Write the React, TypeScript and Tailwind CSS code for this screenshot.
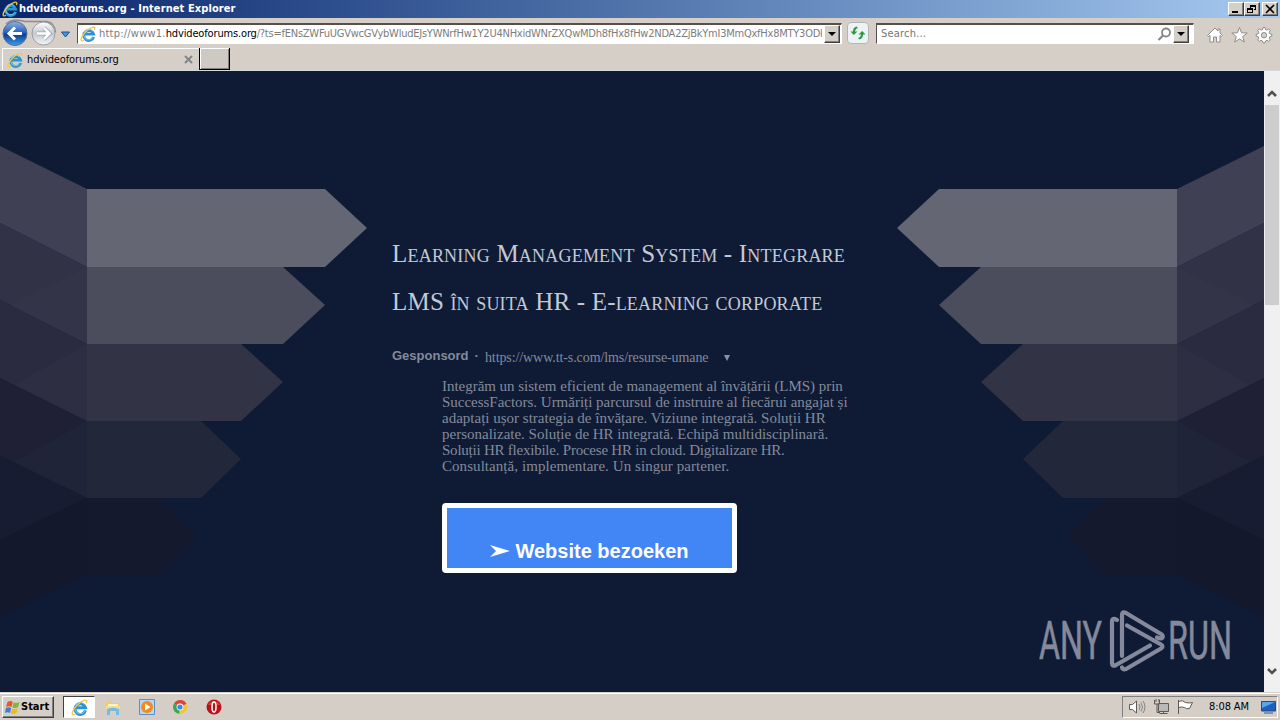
import type { ReactNode } from 'react'

const tahoma = "font-['DejaVu_Sans_Condensed','DejaVu_Sans',sans-serif]"
const raised = 'border border-t-white border-l-white border-r-[#404040] border-b-[#404040] bg-[#d4d0c8] shadow-[inset_-1px_-1px_0_#808080]'

function IeLogo({ size }: { size: number }) {
  return (
    <svg width={size} height={size} viewBox="0 0 16 16" fill="none" className="shrink-0">
      <path d="M13.6 10.800A5 5 0 1 1 13.600 8.200H4.600" stroke="#2a93d3" strokeWidth="2.800" />
      <path d="M13 11.300A4.900 4.900 0 0 1 3.800 9.500M4.500 5.500A5 5 0 0 1 12.500 5" stroke="#7ccdf2" strokeWidth="0.900" />
      <path d="M4 14.200c-2.200 1.400-3.400.5-2.600-1.900C2.700 8.300 8 2.700 12.300 1.300c2.400-.7 3 .7 2.100 2.700" stroke="#efc94a" strokeWidth="1.300" />
    </svg>
  )
}

function WindowButton({ children }: { children: ReactNode }) {
  return (
    <div className={`flex h-[14px] w-4 items-center justify-center ${raised}`}>
      <svg width="12" height="10" viewBox="0 0 12 10" fill="none" stroke="#000" shapeRendering="crispEdges">
        {children}
      </svg>
    </div>
  )
}

function DropButton() {
  return (
    <div className={`flex h-[18px] w-4 items-center justify-center ${raised}`}>
      <svg width="8" height="4" viewBox="0 0 8 4">
        <path d="M0 0h8L4 4z" fill="#000" />
      </svg>
    </div>
  )
}

function TitleBar() {
  return (
    <div className="flex h-[18px] items-center justify-between bg-linear-to-r from-[#0a246a] to-[#a6caf0] pr-[2px] pl-[2px]">
      <div className="flex items-center">
        <IeLogo size={16} />
        <span className={`ml-px pt-px whitespace-nowrap text-[11px] font-bold tracking-[0.09px] text-white ${tahoma}`}>
          hdvideoforums.org - Internet Explorer
        </span>
      </div>
      <div className="flex">
        <WindowButton>
          <path d="M2 8h6" strokeWidth="2" />
        </WindowButton>
        <WindowButton>
          <path d="M4 1h6M4 2h6M4.500 1v3M9.500 1v5M8 5.500h2M1 4h6M1 5h6M1.500 4v5M6.500 4v5M1 8.500h6" />
        </WindowButton>
        <div className="ml-[2px]">
          <WindowButton>
            <path d="M2 1l8 8M10 1l-8 8" strokeWidth="1.600" shapeRendering="auto" />
          </WindowButton>
        </div>
      </div>
    </div>
  )
}

function NavButtons() {
  return (
    <svg width="75" height="28" viewBox="0 0 75 28" fill="none" className="shrink-0">
      <defs>
        <linearGradient id="back" x1="0" y1="0" x2="0" y2="1">
          <stop offset="0" stopColor="#8fb4e6" />
          <stop offset="0.450" stopColor="#2a62bb" />
          <stop offset="0.550" stopColor="#0d3e95" />
          <stop offset="1" stopColor="#3aa0ee" />
        </linearGradient>
        <linearGradient id="forward" x1="0" y1="0" x2="0" y2="1">
          <stop offset="0" stopColor="#ffffff" />
          <stop offset="0.500" stopColor="#c3c8cf" />
          <stop offset="1" stopColor="#f4f6f8" />
        </linearGradient>
      </defs>
      <path d="M6 5C11 0 19 .5 25 2.500h22c5 1 8 5 8.500 11" stroke="#8b8d94" strokeWidth="1.500" />
      <circle cx="43.500" cy="14.500" r="11.500" fill="url(#forward)" stroke="#999ca3" />
      <circle cx="15" cy="14.500" r="12" fill="url(#back)" stroke="#5b6c8c" />
      <path d="M22 14.500H9.500M15 8.500l-6 6 6 6" stroke="#fff" strokeWidth="3" />
      <path d="M37 14.500h12M44 9l5.500 5.500L44 20" stroke="#9da1a8" strokeWidth="4" />
      <path d="M37 14.500h12M44 9l5.500 5.500L44 20" stroke="#fff" strokeWidth="2.500" />
      <path d="M61.500 13h8l-4 5z" fill="#3c9be0" stroke="#1c4e8c" />
    </svg>
  )
}

function Toolbar() {
  return (
    <div className="flex h-[29px] items-start bg-[#d6cfc8] pt-px">
      <NavButtons />
      <div className="mt-1 ml-[2px] flex h-[21px] w-[765px] items-center border-t-2 border-r border-b border-l border-t-[#55504e] border-r-white border-b-white border-l-[#55504e] bg-white pr-px pl-[2px]">
        <IeLogo size={16} />
        <div className={`ml-[3px] w-[723px] shrink-0 overflow-hidden pt-px whitespace-nowrap text-[11px] tracking-[-0.24px] text-[#7c7c7c] ${tahoma}`}>
          <span className="tracking-[0.22px]">http://www1.</span>
          <span className="tracking-[-0.15px] text-black">hdvideoforums.org</span>
          /?ts=fENsZWFuUGVwcGVybWludEJsYWNrfHw1Y2U4NHxidWNrZXQwMDh8fHx8fHw2NDA2ZjBkYmI3MmQxfHx8MTY3ODk
        </div>
        <div className="ml-auto">
          <DropButton />
        </div>
      </div>
      <div className="mt-[3px] ml-[5px] flex h-[22px] w-[22px] items-center justify-center rounded-sm border border-[#b5b5b8] bg-[#edf2f5]">
        <svg width="16" height="16" viewBox="0 0 16 16" fill="#2d9a3c">
          <path d="M6.500 1.500 8 3C6 3.500 5 5 5 6.500h2.500L3.800 10 0.500 6.500H3C3 4 4 2 6.500 1.500z" />
          <path d="M9.500 14.500 8 13c2-.5 3-2 3-3.500H8.500L12.200 6l3.300 3.500H13c0 2.500-1 4.500-3.500 5z" />
        </svg>
      </div>
      <div className="mt-1 ml-[7px] flex h-[21px] w-[318px] items-center border-t-2 border-r border-b border-l border-t-[#55504e] border-r-white border-b-white border-l-[#55504e] bg-white pr-1 pl-1">
        <span className={`pt-px text-[11px] tracking-[0.2px] text-[#757575] ${tahoma}`}>Search...</span>
        <svg width="15" height="15" viewBox="0 0 15 15" fill="none" stroke="#858585" className="mr-[1px] ml-auto">
          <circle cx="9" cy="5.500" r="4" strokeWidth="1.800" />
          <path d="M6 8.500 1.500 13" strokeWidth="2.200" />
        </svg>
        <DropButton />
      </div>
      <svg width="68" height="20" viewBox="0 0 68 20" fill="#fff" stroke="#8d8d8d" className="mt-[6px] ml-3">
        <path d="M1.500 10.500 9 3l3 3V4h2v4l2.500 2.500-1 1-1.500-1V17h-3.500v-5h-3v5H4v-6.500l-1.500 1z" />
        <path d="m33.500 2.500 2 5.300 5.700.2-4.500 3.600 1.600 5.500-4.800-3.200-4.800 3.200 1.600-5.500L25.800 8l5.700-.2z" />
        <path d="m57 2.500 2 0 .5 2 1.500.6 1.800-1.200 1.500 1.500L63.200 7.200l.6 1.500 2 .5v2l-2 .5-.6 1.500 1.100 1.800-1.500 1.500-1.800-1.200-1.500.6-.5 2h-2l-.5-2-1.500-.6-1.800 1.200-1.500-1.500 1.100-1.800-.6-1.500-2-.5v-2l2-.5.6-1.500-1.100-1.800 1.500-1.500L55 5.100l1.500-.6z" />
        <circle cx="58" cy="10.200" r="2.700" fill="#d6cfc8" />
      </svg>
    </div>
  )
}

function TabBar() {
  return (
    <div className="flex h-6 items-start border-b border-[#d3d8dc] bg-[#d6cfc8] pl-[2px]">
      <div className="mt-px flex h-[22px] w-[197px] items-center border-t border-l border-white pr-[6px] pl-1">
        <IeLogo size={16} />
        <span className={`ml-1 pt-[2px] text-[11px] tracking-[-0.12px] text-black ${tahoma}`}>hdvideoforums.org</span>
        <svg width="9" height="9" viewBox="0 0 9 9" stroke="#858585" strokeWidth="2" className="ml-auto">
          <path d="M1 1l7 7M8 1l-7 7" />
        </svg>
      </div>
      <div className="mt-px h-[22px] w-[31px] border-r border-b border-l border-black bg-[#cfc9c3] shadow-[inset_1px_1px_0_#fff,inset_-1px_-1px_0_#808080]" />
    </div>
  )
}

// One side of folded ribbons; the right side reuses it mirrored
function Ribbons() {
  return (
    <g>
      <path d="M0 75 87 118V196L0 152z" fill="#3f4054" />
      <path d="M0 152 87 196V273L0 229z" fill="#313246" />
      <path d="M87 196V273L10 234z" fill="#333448" />
      <path d="M0 229 87 273V350L0 307z" fill="#2a2a40" />
      <path d="M87 273V350L14 314z" fill="#2d2e42" />
      <path d="M0 307 87 350V427L0 385z" fill="#1f2035" />
      <path d="M87 350V427L14 391z" fill="#202438" />
      <path d="M0 385 87 427 0 469z" fill="#181c32" />
      <path d="M87 427V504L0 545V469z" fill="#13182d" />
      <path d="M87 118H325L367 157 325 196H87z" fill="#646674" />
      <path d="M87 196H283L325 234 283 273H87z" fill="#4c4d5c" />
      <path d="M87 273H241L283 311 241 350H87z" fill="#323345" />
      <path d="M87 350H201L241 388 201 427H87z" fill="#222739" />
      <path d="M87 427H160L197 465 160 504H87z" fill="#14192d" />
    </g>
  )
}

function Watermark() {
  return (
    <svg width="196" height="66" viewBox="0 0 196 66" fill="none" className="absolute top-[537px] left-[1038px]">
      <g fill="#848a9b" stroke="#848a9b" strokeWidth="0.600" fontFamily="Roboto, sans-serif" fontSize="53">
        <text x="1" y="51" textLength="63" lengthAdjust="spacingAndGlyphs">ANY</text>
        <text x="130" y="51" textLength="64" lengthAdjust="spacingAndGlyphs">RUN</text>
      </g>
      <g stroke="#848a9b" strokeWidth="4.200" strokeLinejoin="round" strokeLinecap="round">
        <path d="M79 12q-5-3-5 2V55q0 4 4 2L112 37.500" />
        <path d="M84 48V7q0-4 4-2L123 26q3 2 1 4-2 1-5-.5" />
        <path d="M89 17.500 123 36.500q3 2 0 4L88 61q-3 1-4-1.500" />
      </g>
    </svg>
  )
}

function Page() {
  return (
    <main className="relative h-[621px] w-[1264px] overflow-hidden bg-[#0f1b35]">
      <svg width="1264" height="621" viewBox="0 0 1264 621" className="absolute inset-0">
        <Ribbons />
        <g transform="translate(1264 0) scale(-1 1)">
          <Ribbons />
        </g>
      </svg>
      <div className="relative ml-[392px] w-[480px] pt-[159px] font-['Liberation_Serif',serif]">
        <h1 className="text-[25px] leading-[48px] whitespace-nowrap text-[#c3c9d6] [font-variant:small-caps]">
          <span className="block tracking-[0.21px]">Learning Management System - Integrare</span>
          <span className="block tracking-[0.19px]">LMS în suita HR - E-learning corporate</span>
        </h1>
        <div className="mt-5 flex h-5 items-center whitespace-nowrap text-[#838a9a]">
          <span className="font-['Liberation_Sans',sans-serif] text-[13px] font-bold">Gesponsord</span>
          <span className="ml-[6px] font-['Liberation_Sans',sans-serif] text-[13px] font-bold">·</span>
          <span className="mt-[3px] ml-[6px] text-[14px] tracking-[-0.09px]">https://www.tt-s.com/lms/resurse-umane</span>
          <svg width="6" height="6" viewBox="0 0 6 6" fill="#8b91a0" className="mt-[3px] ml-4">
            <path d="M0 0h6L3 6z" />
          </svg>
        </div>
        <p className="mt-3 ml-[50px] text-[15px] leading-4 whitespace-nowrap text-[#838a9a]">
          <span className="block tracking-[-0.03px]">Integrăm un sistem eficient de management al învățării (LMS) prin</span>
          <span className="block tracking-[-0.02px]">SuccessFactors. Urmăriți parcursul de instruire al fiecărui angajat și</span>
          <span className="block">adaptați ușor strategia de învățare. Viziune integrată. Soluții HR</span>
          <span className="block">personalizate. Soluție de HR integrată. Echipă multidisciplinară.</span>
          <span className="block tracking-[-0.23px]">Soluții HR flexibile. Procese HR in cloud. Digitalizare HR.</span>
          <span className="block tracking-[0.06px]">Consultanță, implementare. Un singur partener.</span>
        </p>
        <a className="mt-[29px] ml-[50px] flex h-[70px] w-[295px] items-end justify-center rounded-[4px] border-[5px] border-white bg-[#4285f4] pb-[3px] font-['Liberation_Sans',sans-serif] text-[20px] leading-7 font-bold text-white">
          <svg width="20" height="12" viewBox="0 0 20 12" fill="#fff" className="mr-[5px] mb-[8px]">
            <path d="M0 0 20 6 0 12 6 6z" />
          </svg>
          Website bezoeken
        </a>
      </div>
      <Watermark />
    </main>
  )
}

function ScrollBar() {
  return (
    <div className="flex h-[621px] w-4 flex-col items-center bg-[#f0f0f0]">
      <svg width="10" height="7" viewBox="0 0 10 7" fill="none" stroke="#505050" strokeWidth="2.500" className="mt-[19px]">
        <path d="m1 6 4-4 4 4" />
      </svg>
      <div className="mt-2 h-[200px] w-[14px] bg-[#cdcdcd]" />
      <svg width="10" height="7" viewBox="0 0 10 7" fill="none" stroke="#505050" strokeWidth="2.500" className="mt-auto mb-[17px]">
        <path d="m1 1 4 4 4-4" />
      </svg>
    </div>
  )
}

function TaskBar() {
  return (
    <footer className="flex h-7 items-start border-t border-[#d4d0c8] bg-[#d4cec6] pt-[3px] pr-[2px] pl-[2px] shadow-[inset_0_1px_0_#fff]">
      <div className={`flex h-[22px] w-[52px] items-center pl-[2px] ${raised}`}>
        <svg width="15" height="15" viewBox="0 0 15 15">
          <path d="M2.500 2C4.500.6 6 .8 7.800 1.800L6.500 7C4.500 6 3 6 1 7z" fill="#e8562a" />
          <path d="M8.600 2.200c2 .9 3.600.9 6-.3L13 7.200c-2 1-3.600 1-5.600.2z" fill="#7db83a" />
          <path d="M.9 8c2-1 3.500-.9 5.300.1L5 13c-2-1-3.300-1-5 0z" fill="#3c7fd0" />
          <path d="M7.100 8.400c2 .9 3.500.9 5.700-.2L11.400 13.300c-2 1-3.600 1-5.600.1z" fill="#f3b81e" />
        </svg>
        <span className={`ml-px pt-px text-[11px] font-bold text-black ${tahoma}`}>Start</span>
      </div>
      <div className="ml-[9px] flex h-[22px] w-8 items-center justify-center border border-t-[#404040] border-r-white border-b-white border-l-[#404040] bg-white">
        <IeLogo size={17} />
      </div>
      <svg width="16" height="16" viewBox="0 0 16 16" className="mt-[4px] ml-[10px]">
        <path d="M1 2h5l1 1h7v6H1z" fill="#e9cc73" />
        <path d="M3 4h10v4H3z" fill="#fff3c4" />
        <path d="M1 6h14v3H1z" fill="#f3dd92" />
        <path d="M2 9q6-3 12 0v6h-3v-4H5v4H2z" fill="#76bce0" />
      </svg>
      <svg width="16" height="16" viewBox="0 0 16 16" className="mt-[3px] ml-[18px]">
        <path d="M.5.500h15v15H.5z" fill="#b9d5ef" stroke="#5c8ecb" />
        <circle cx="8" cy="8" r="6" fill="#f28b1c" />
        <path d="m6 4.500 5.500 3.500L6 11.500z" fill="#fff" />
      </svg>
      <svg width="16" height="16" viewBox="0 0 16 16" className="mt-[3px] ml-[17px]">
        <path d="M8 8 2 4.500A7 7 0 0 1 14.500 5z" fill="#dc4437" />
        <path d="M8 8 7.500 15A7 7 0 0 1 2 4.500z" fill="#3aa757" />
        <path d="M8 8 14.500 5A7 7 0 0 1 7.500 15z" fill="#f7c52d" />
        <circle cx="8" cy="8" r="3.400" fill="#fff" />
        <circle cx="8" cy="8" r="2.600" fill="#4285f4" />
      </svg>
      <svg width="16" height="16" viewBox="0 0 16 16" className="mt-[3px] ml-[18px]">
        <circle cx="8" cy="8" r="7.500" fill="#b91218" />
        <path d="M2 6a6.500 6.500 0 0 1 12 0z" fill="#e35b5b" fillOpacity="0.600" />
        <ellipse cx="8" cy="8" rx="2" ry="5" fill="#b91218" stroke="#fff" strokeWidth="1.500" />
      </svg>
      <div className="ml-auto flex h-[22px] w-[156px] items-center border border-t-[#808080] border-r-white border-b-white border-l-[#808080] pl-[5px]">
        <svg width="66" height="18" viewBox="0 0 66 18" fill="#fff" stroke="#5b5b5b">
          <path d="M1.500 6.500h3L8.500 3v12L4.500 11.500h-3z" />
          <path d="M11 6q2 3 0 6M13 4.500q3 4.500 0 9M15 3q4 6 0 12" fill="none" stroke="#858585" />
          <path d="M30.500 5.500h10v8h-10z" fill="#b9b9b9" />
          <path d="M31.500 15.500h8M35.500 13.500v2M26.500 2v4h5V2M29 6v8.500h3M28 1v3M31 1v3" fill="none" />
          <path d="M50.500 2v14M50.500 3.500q4-2 7 1 4 1 7 0l-3 6q-3 1-5-1-3-1-6 0" />
        </svg>
        <span className={`ml-[15px] pt-px text-[11px] whitespace-nowrap tracking-[-0.1px] text-black ${tahoma}`}>8:08 AM</span>
        <svg width="15" height="13" viewBox="0 0 15 13" className="mr-px ml-auto">
          <path d="M.5.500h14v9.500H.5z" fill="#1d5fbd" stroke="#2f486e" />
          <path d="M1 1h13L1 7z" fill="#5da5e8" />
          <path d="M3 12h9" stroke="#5f7fa8" strokeWidth="1.500" />
        </svg>
      </div>
    </footer>
  )
}

export default function App() {
  return (
    <div className="flex h-[720px] w-[1280px] flex-col overflow-hidden bg-[#d4d0c8]">
      <TitleBar />
      <Toolbar />
      <TabBar />
      <div className="flex">
        <Page />
        <ScrollBar />
      </div>
      <TaskBar />
    </div>
  )
}
